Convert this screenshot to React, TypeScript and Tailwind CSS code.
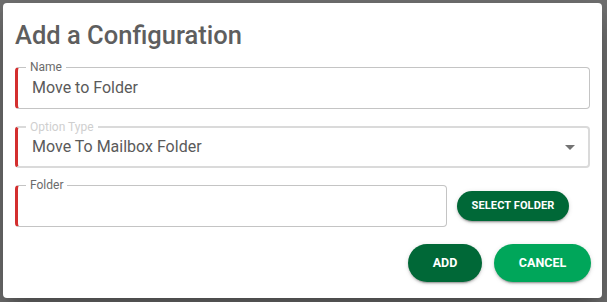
import React from "react";

function Field({
  label,
  value,
  disabled,
  select,
  className = "",
}: {
  label: string;
  value?: string;
  disabled?: boolean;
  select?: boolean;
  className?: string;
}) {
  return (
    <div
      className={
        "relative h-[42px] rounded-[4px] border-l-[3px] border-l-[#d32f2f] " +
        (disabled
          ? "border-y-2 border-r-2 border-y-[#dadada] border-r-[#dadada] "
          : "border-y border-r border-y-[#c4c4c4] border-r-[#c4c4c4] ") +
        className
      }
    >
      <span
        className={
          "absolute left-[8px] top-[-8px] bg-white px-[4px] text-[12px] leading-[14px] " +
          (disabled ? "text-[#cfcfcf]" : "text-[#6b6b6b]")
        }
      >
        {label}
      </span>
      <div className="flex h-full items-center pl-[14px] pr-[12px] text-[16px] text-[#5a5a5a]">
        <span className="flex-1">{value}</span>
        {select && (
          <svg width="10" height="5" viewBox="0 0 10 5" className="mr-[1px]">
            <path d="M0 0 L10 0 L5 5 Z" fill="#737373" />
          </svg>
        )}
      </div>
    </div>
  );
}

export default function App() {
  return (
    <div
      className="h-[302px] w-[607px] overflow-hidden bg-[#727272] pl-[3px] pt-[3px]"
      style={{ fontFamily: "Roboto, 'Liberation Sans', sans-serif" }}
    >
      <div className="flex h-[295px] w-[599px] flex-col rounded-[4px] bg-white px-[12px] pb-[16px] pt-[16px] shadow-[0_11px_15px_-7px_rgba(0,0,0,0.2),0_24px_38px_3px_rgba(0,0,0,0.14),0_9px_46px_8px_rgba(0,0,0,0.12)]">
        <h1 className="text-[25.5px] font-medium leading-[32px] text-[#5e5e5e]">
          Add a Configuration
        </h1>
        <div className="mt-[16px] flex flex-col gap-[17px]">
          <Field label="Name" value="Move to Folder" />
          <Field label="Option Type" value="Move To Mailbox Folder" disabled select />
          <div className="flex items-center">
            <Field label="Folder" className="w-[432px]" />
            <button className="ml-[10px] h-[30px] w-[112px] rounded-full bg-[#006837] text-[11px] font-bold tracking-[0.01em] text-white shadow-[0_3px_1px_-2px_rgba(0,0,0,0.2),0_2px_2px_0_rgba(0,0,0,0.14),0_1px_5px_0_rgba(0,0,0,0.12)]">
              SELECT FOLDER
            </button>
          </div>
        </div>
        <div className="mt-[17px] flex justify-end gap-[12px]">
          <button className="h-[38px] w-[74px] rounded-full bg-[#006837] text-[12.5px] font-bold text-white shadow-[0_3px_1px_-2px_rgba(0,0,0,0.2),0_2px_2px_0_rgba(0,0,0,0.14),0_1px_5px_0_rgba(0,0,0,0.12)]">
            ADD
          </button>
          <button className="mr-[-1px] h-[38px] w-[97px] rounded-full bg-[#00a65a] text-[12.5px] font-bold text-white shadow-[0_3px_1px_-2px_rgba(0,0,0,0.2),0_2px_2px_0_rgba(0,0,0,0.14),0_1px_5px_0_rgba(0,0,0,0.12)]">
            CANCEL
          </button>
        </div>
      </div>
    </div>
  );
}
